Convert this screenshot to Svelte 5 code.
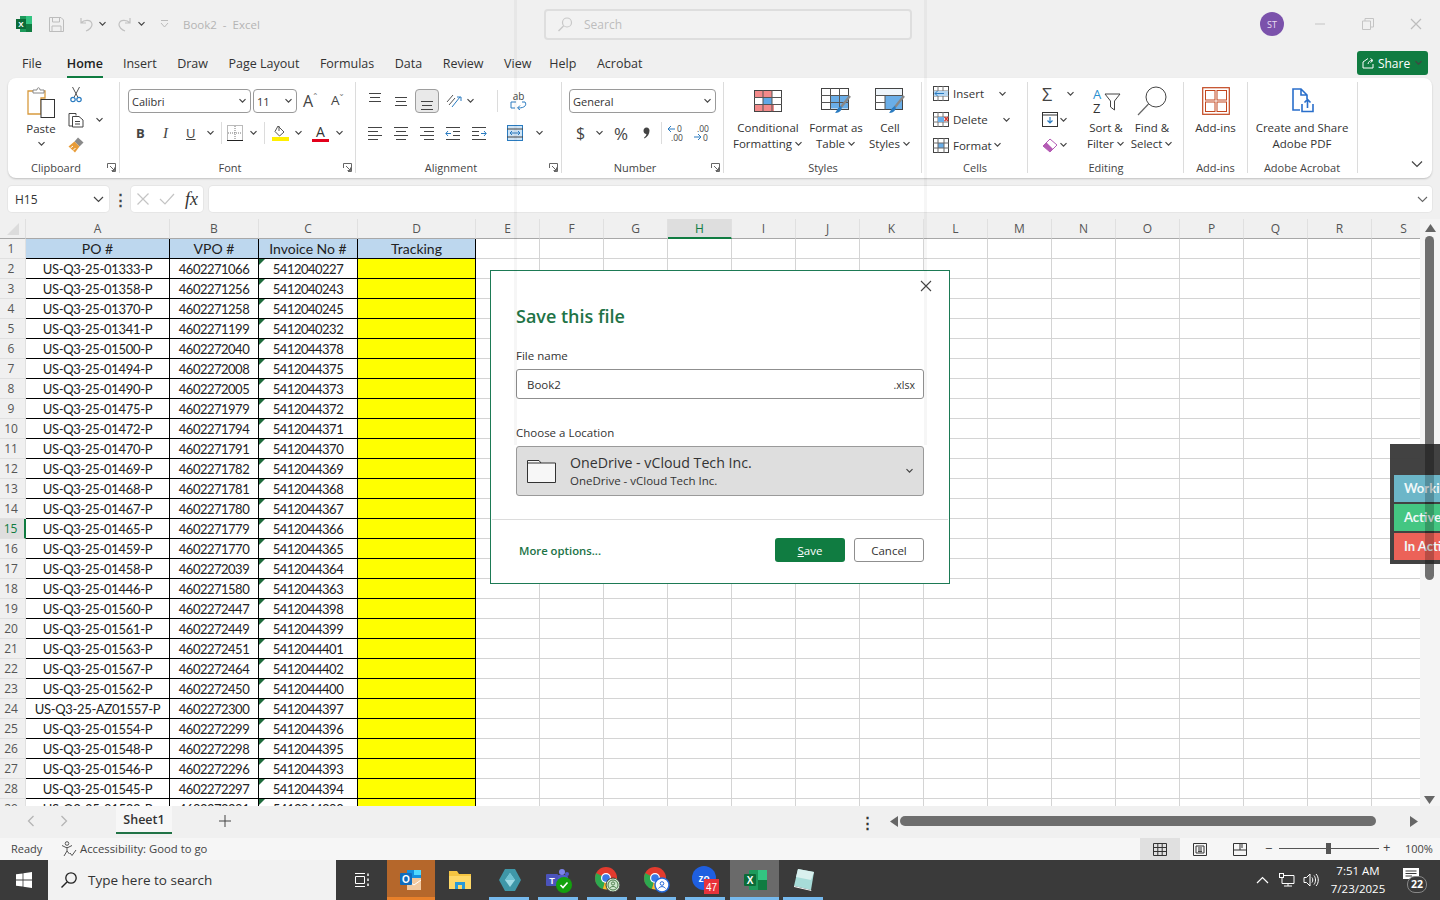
<script>
  const cols = ['E','F','G','H','I','J','K','L','M','N','O','P','Q','R','S'];
  const d = [
    ['US-Q3-25-01333-P','4602271066','5412040227'],['US-Q3-25-01358-P','4602271256','5412040243'],
    ['US-Q3-25-01370-P','4602271258','5412040245'],['US-Q3-25-01341-P','4602271199','5412040232'],
    ['US-Q3-25-01500-P','4602272040','5412044378'],['US-Q3-25-01494-P','4602272008','5412044375'],
    ['US-Q3-25-01490-P','4602272005','5412044373'],['US-Q3-25-01475-P','4602271979','5412044372'],
    ['US-Q3-25-01472-P','4602271794','5412044371'],['US-Q3-25-01470-P','4602271791','5412044370'],
    ['US-Q3-25-01469-P','4602271782','5412044369'],['US-Q3-25-01468-P','4602271781','5412044368'],
    ['US-Q3-25-01467-P','4602271780','5412044367'],['US-Q3-25-01465-P','4602271779','5412044366'],
    ['US-Q3-25-01459-P','4602271770','5412044365'],['US-Q3-25-01458-P','4602272039','5412044364'],
    ['US-Q3-25-01446-P','4602271580','5412044363'],['US-Q3-25-01560-P','4602272447','5412044398'],
    ['US-Q3-25-01561-P','4602272449','5412044399'],['US-Q3-25-01563-P','4602272451','5412044401'],
    ['US-Q3-25-01567-P','4602272464','5412044402'],['US-Q3-25-01562-P','4602272450','5412044400'],
    ['US-Q3-25-AZ01557-P','4602272300','5412044397'],['US-Q3-25-01554-P','4602272299','5412044396'],
    ['US-Q3-25-01548-P','4602272298','5412044395'],['US-Q3-25-01546-P','4602272296','5412044393'],
    ['US-Q3-25-01545-P','4602272297','5412044394'],['US-Q3-25-01533-P','4602272291','5412044390']
  ];
  const tabs = ['File','Home','Insert','Draw','Page Layout','Formulas','Data','Review','View','Help','Acrobat'];
</script>

{#snippet chev(cls = '')}
  <svg class="chev {cls}" width="9" height="6" viewBox="0 0 9 6"><path d="M1.5 1.2 4.5 4.2 7.5 1.2" fill="none" stroke="currentColor" stroke-width="1.2"/></svg>
{/snippet}
{#snippet launcher()}
  <svg class="launcher" width="9" height="9" viewBox="0 0 9 9"><path d="M.5 5V.5H8.5V8.5H5M3 3 7.5 7.5M7.5 4.5V7.5H4.5" fill="none" stroke="#666" stroke-width="1"/></svg>
{/snippet}

<div class="app">
  <header class="title">
    <svg class="logo" width="18" height="18" viewBox="0 0 18 18"><rect x="5" y="1" width="12" height="16" fill="#1d9a5b"/><rect x="11" y="1" width="6" height="8" fill="#33c481"/><rect x="11" y="9" width="6" height="8" fill="#107c41"/><rect x="1" y="4" width="10" height="10" fill="#0c6b38"/><text x="6" y="12" fill="#fff" font-size="8" font-weight="700" text-anchor="middle" font-family="Liberation Sans">X</text></svg>
    <svg class="qa qsave" width="17" height="17" viewBox="0 0 17 17"><path d="M1.5 1.5H13L15.5 4V15.5H1.5ZM4.5 1.5V6H11.5V1.5M4 15.5V10H13V15.5" fill="none" stroke="#bcbcbc"/></svg>
    <svg class="qa undo" width="16" height="15" viewBox="0 0 16 15"><path d="M3 1V6H8M3 6C6 2.5 13 2 14 7 14.5 10 11 13 8 14" fill="none" stroke="#c0c0c0" stroke-width="1.2"/></svg>
    <span class="qc qc1">{@render chev()}</span>
    <svg class="qa redo" width="16" height="15" viewBox="0 0 16 15"><path d="M13 1V6H8M13 6C10 2.5 3 2 2 7 1.5 10 5 13 8 14" fill="none" stroke="#c0c0c0" stroke-width="1.2"/></svg>
    <span class="qc qc2">{@render chev()}</span>
    <svg class="qa cust" width="9" height="10" viewBox="0 0 9 10"><path d="M1 1.5H8M1 4 4.5 8 8 4" fill="none" stroke="#bbb"/></svg>
    <span class="doc">Book2&nbsp; - &nbsp;Excel</span>
    <div class="search">
      <svg width="17" height="17" viewBox="0 0 17 17"><circle cx="10" cy="6.5" r="4.5" fill="none" stroke="#c8c8c8" stroke-width="1.2"/><path d="M6.5 10 1.5 15" stroke="#c8c8c8" stroke-width="1.4"/></svg>
      <span>Search</span>
    </div>
    <div class="avatar">ST</div>
    <svg class="win first" width="12" height="12" viewBox="0 0 12 12"><path d="M1 6H11" stroke="#c4c4c4"/></svg>
    <svg class="win" width="12" height="12" viewBox="0 0 12 12"><path d="M.5 3H8.5V11.5H.5ZM3 3V.5H11.5V9H8.5" fill="none" stroke="#c4c4c4"/></svg>
    <svg class="win" width="12" height="12" viewBox="0 0 12 12"><path d="M1 1 11 11M11 1 1 11" stroke="#bdbdbd" stroke-width="1.2"/></svg>
  </header>

  <nav class="tabs">
    {#each tabs as t}<span class="tab tab-{t.split(' ')[0]}" class:on={t === 'Home'}>{t}</span>{/each}
    <button class="share">
      <svg width="12" height="12" viewBox="0 0 12 12"><path d="M6 1.5 1 5V11H11V7M6 7C6.5 4.5 8 3.5 10 3.5M8.5 1.5 11 3.5 8.5 5.5" fill="none" stroke="#fff"/></svg>
      Share {@render chev()}
    </button>
  </nav>

  <section class="ribbon">
    <div class="g clip">
      <div class="gb">
        <div class="paste">
          <svg width="28" height="31" viewBox="0 0 28 31"><path d="M6 4H18V11H14V27H1V4Z" fill="#fff" stroke="#d89a3e" stroke-width="1.3"/><path d="M6 6V3H10C10 0 13 0 13 3H17V6Z" fill="#fff" stroke="#888"/><rect x="14" y="12.5" width="13.5" height="18" fill="#fff" stroke="#333"/></svg>
          <span>Paste</span>
          {@render chev()}
        </div>
        <div class="clipcol">
          <svg width="12" height="17" viewBox="0 0 12 17"><path d="M2.5 1 8 11.5M9.5 1 4 11.5" stroke="#555" fill="none"/><circle cx="3" cy="13.5" r="2.2" fill="none" stroke="#2a7bc0" stroke-width="1.2"/><circle cx="9" cy="13.5" r="2.2" fill="none" stroke="#2a7bc0" stroke-width="1.2"/></svg>
          <div class="r"><svg width="16" height="16" viewBox="0 0 16 16"><path d="M1 1.5H8V3.5M4 14H1V1.5M4.5 4.5H11L15 8V15H4.5ZM7 9.5H12M7 12H12" fill="#fff" stroke="#444"/></svg>{@render chev()}</div>
          <svg width="16" height="16" viewBox="0 0 16 16"><path d="M10 .5 15.5 5.5 11.5 9.5 6.5 4.5Z" fill="#8a8a8a"/><path d="M6.5 4.5 11.5 9.5 7 15.5 .5 9.5Z" fill="#e89c38"/><path d="M2.5 11 5 9M5 13.5 7.5 11" stroke="#fff"/></svg>
        </div>
      </div>
      <div class="gl lg"><span>Clipboard</span>{@render launcher()}</div>
    </div>

    <div class="g font">
      <div class="gb col">
        <div class="r rt">
          <div class="sel fname"><span>Calibri</span>{@render chev()}</div>
          <div class="sel fsize"><span>11</span>{@render chev()}</div>
          <span class="grow g1">A<sup>ˆ</sup></span>
          <span class="shrink">A<sup>ˇ</sup></span>
        </div>
        <div class="r rb">
          <span class="fb">B</span><span class="fi">I</span><span class="fu">U</span>{@render chev('c1')}
          <i class="sep s1"></i>
          <svg class="bd" width="16" height="16" viewBox="0 0 16 16"><rect x=".5" y=".5" width="15" height="15" fill="none" stroke="#777" stroke-dasharray="1 1"/><path d="M8 1V15M1 8H15" stroke="#777" stroke-dasharray="1 1"/><path d="M0 15.5H16" stroke="#222"/></svg>
          {@render chev('c2')}
          <i class="sep s2"></i>
          <svg class="fill" width="17" height="16" viewBox="0 0 17 16"><path d="M6 1 12 7 7.5 11 3 6.5Z" fill="#fff" stroke="#555"/><path d="M7 1 7 6" stroke="#555"/><rect y="12" width="17" height="4" fill="#ffef00"/></svg>
          {@render chev('c3')}
          <span class="fc">A</span>
          {@render chev('c4')}
        </div>
      </div>
      <div class="gl lg"><span>Font</span>{@render launcher()}</div>
    </div>

    <div class="g align">
      <div class="gb col">
        <div class="r rt">
          <span class="a"><svg width="16" height="24" viewBox="0 0 16 24"><path d="M2 4.5H14M3 8.5H13M2 12.5H14" stroke="#444" fill="none"/></svg></span>
          <span class="a"><svg width="16" height="24" viewBox="0 0 16 24"><path d="M2 8.5H14M3 12.5H13M2 16.5H14" stroke="#444" fill="none"/></svg></span>
          <span class="a actv"><svg width="16" height="22" viewBox="0 0 16 22"><path d="M2 11.5H14M3 15.5H13M2 19.5H14" stroke="#444" fill="none"/></svg></span>
          <svg class="ori" width="16" height="14" viewBox="0 0 16 14"><path d="M1 8 7 1M3 11 9 4" stroke="#555" fill="none"/><path d="M6 13 14 3M11 3H15V7" stroke="#2a7bc0" fill="none"/></svg>
          {@render chev('c5')}
          <i class="sep s3"></i>
          <span class="wrap"><b>ab</b><svg width="17" height="9" viewBox="0 0 17 9"><path d="M6 1H1V7H5M12 1H15C17 4 15 7 8 7M10 4.5 7.5 7 10 9" stroke="#2a7bc0" fill="none"/></svg></span>
        </div>
        <div class="r rb">
          <span class="a"><svg width="16" height="14" viewBox="0 0 16 14"><path d="M1 1.5H15M1 5.5H11M1 9.5H15M1 13.5H11" stroke="#444" fill="none"/></svg></span>
          <span class="a"><svg width="16" height="14" viewBox="0 0 16 14"><path d="M1 1.5H15M3 5.5H13M1 9.5H15M3 13.5H13" stroke="#444" fill="none"/></svg></span>
          <span class="a"><svg width="16" height="14" viewBox="0 0 16 14"><path d="M1 1.5H15M5 5.5H15M1 9.5H15M5 13.5H15" stroke="#444" fill="none"/></svg></span>
          <span class="a"><svg width="16" height="14" viewBox="0 0 16 14"><path d="M1 1.5H15M8 5.5H15M8 9.5H15M1 13.5H15" stroke="#444" fill="none"/><path d="M6 7.5H1M3 5 .8 7.5 3 10" stroke="#2a7bc0" fill="none"/></svg></span>
          <span class="a"><svg width="16" height="14" viewBox="0 0 16 14"><path d="M1 1.5H15M1 5.5H8M1 9.5H8M1 13.5H15" stroke="#444" fill="none"/><path d="M10 7.5H15M13 5 15.2 7.5 13 10" stroke="#2a7bc0" fill="none"/></svg></span>
          <svg class="merge" width="16" height="16" viewBox="0 0 16 16"><rect x=".5" y=".5" width="15" height="15" fill="#cfe4f5" stroke="#2a7bc0"/><path d="M0 4H16M0 12H16" stroke="#444"/><path d="M3 8H13M5 6 3 8 5 10M11 6 13 8 11 10" fill="none" stroke="#2a7bc0"/></svg>
          {@render chev('c6')}
        </div>
      </div>
      <div class="gl lg"><span>Alignment</span>{@render launcher()}</div>
    </div>

    <div class="g num">
      <div class="gb col">
        <div class="r rt"><div class="sel nf"><span>General</span>{@render chev()}</div></div>
        <div class="r rb">
          <span class="dollar">$</span>{@render chev('c7')}
          <span class="pct">%</span>
          <svg class="comma" width="7" height="12" viewBox="0 0 7 12"><path d="M3.5.5C5.5.5 6.5 2 6.5 3.8 6.5 7 4.5 10 1.5 11.5L1 10.7C2.5 9.5 3.3 8.3 3.4 7 1.5 7 .5 5.5.5 3.8.5 2 1.7.5 3.5.5Z" fill="#444"/></svg>
          <i class="sep s5"></i>
          <svg class="dec" width="18" height="18" viewBox="0 0 18 18"><path d="M8 5H1M4 2 1 5 4 8" stroke="#2a7bc0" fill="none"/><text x="10" y="8" font-size="8.5" fill="#444">0</text><text x="4" y="17" font-size="8.5" fill="#444">.00</text></svg>
          <svg class="dec d2" width="18" height="18" viewBox="0 0 18 18"><text x="4" y="8" font-size="8.5" fill="#444">.00</text><path d="M8 13H1M5 10 8 13 5 16" stroke="#2a7bc0" fill="none"/><text x="10" y="17" font-size="8.5" fill="#444">0</text></svg>
        </div>
      </div>
      <div class="gl lg"><span>Number</span>{@render launcher()}</div>
    </div>

    <div class="g sty">
      <div class="gb bigs">
        <div class="big b1">
          <svg width="28" height="22" viewBox="0 0 28 22"><rect x=".5" y=".5" width="27" height="21" fill="#fff" stroke="#444"/><rect x="1" y="1" width="17" height="6.5" fill="#f28a8a"/><rect x="1" y="14" width="19" height="7" fill="#f28a8a"/><rect x="9" y="7.5" width="9" height="7" fill="#5fa8e6"/><path d="M9 0V22M18 0V22M0 7.5H28M0 14.5H28" stroke="#555"/></svg>
          <span>Conditional<br>Formatting{@render chev()}</span>
        </div>
        <div class="big b2">
          <svg width="30" height="26" viewBox="0 0 30 26"><rect x=".5" y=".5" width="27" height="21" fill="#fff" stroke="#444"/><rect x="10" y="7.5" width="17" height="13" fill="#6aaee8"/><path d="M9.5 0V22M18.5 0V22M0 7.5H28M0 14.5H28" stroke="#555"/><path d="M29 8 20 19" stroke="#888" stroke-width="2.4"/><path d="M20 18C22 20 20 25 14 25 16 23 16 20 20 18Z" fill="#2a7bc0"/></svg>
          <span>Format as<br>Table{@render chev()}</span>
        </div>
        <div class="big b3">
          <svg width="30" height="26" viewBox="0 0 30 26"><rect x=".5" y=".5" width="27" height="21" fill="#fff" stroke="#444"/><rect x="10" y="7" width="17" height="14" fill="#6aaee8"/><rect x="1" y="1" width="26" height="6" fill="#eef5fb"/><path d="M0 7.5H28M10 7V22M0 14.5H10" stroke="#555"/><path d="M29 8 20 19" stroke="#888" stroke-width="2.4"/><path d="M20 18C22 20 20 25 14 25 16 23 16 20 20 18Z" fill="#2a7bc0"/></svg>
          <span>Cell<br>Styles{@render chev()}</span>
        </div>
      </div>
      <div class="gl center"><span>Styles</span></div>
    </div>

    <div class="g cells">
      <div class="gb col three">
        <div class="r cr">
          <svg width="16" height="15" viewBox="0 0 16 15"><rect x=".5" y=".5" width="15" height="14" fill="#fff" stroke="#444"/><path d="M5 0V15M10 0V15M0 5H16M0 10H16" stroke="#777"/><rect x="1" y="5" width="14" height="5" fill="#b6d7f2"/><path d="M11 7.5H2M4.5 5 2 7.5 4.5 10" stroke="#2a7bc0" fill="none"/></svg>
          <span>Insert</span>{@render chev('ci')}
        </div>
        <div class="r cr">
          <svg width="16" height="15" viewBox="0 0 16 15"><rect x=".5" y=".5" width="15" height="14" fill="#fff" stroke="#444"/><path d="M5 0V15M10 0V15M0 5H16M0 10H16" stroke="#777"/><rect x="5" y="5" width="6" height="5" fill="#6aaee8"/><path d="M11.5 5 15 9M15 5 11.5 9" stroke="#d9362b" stroke-width="1.3"/></svg>
          <span>Delete</span>{@render chev('cd')}
        </div>
        <div class="r cr">
          <svg width="16" height="16" viewBox="0 0 16 16"><rect x=".5" y="1.5" width="15" height="14" fill="#fff" stroke="#444"/><rect x="5" y="6" width="6" height="5" fill="#6aaee8"/><path d="M5 1V16M11 1V16M0 6H16M0 11H16" stroke="#666"/></svg>
          <span>Format</span>{@render chev('cf')}
        </div>
      </div>
      <div class="gl center"><span>Cells</span></div>
    </div>

    <div class="g edit">
      <div class="gb eb">
        <div class="col ec">
          <div class="r"><span class="sigma">Σ</span>{@render chev('e1')}</div>
          <div class="r"><svg width="16" height="15" viewBox="0 0 16 15"><rect x=".5" y=".5" width="15" height="14" fill="#fff" stroke="#333"/><path d="M0 3H16" stroke="#333"/><path d="M8 5V11M5.5 8.5 8 11 10.5 8.5" stroke="#2a7bc0" fill="none" stroke-width="1.2"/></svg>{@render chev('e2')}</div>
          <div class="r"><svg width="16" height="15" viewBox="0 0 16 15"><path d="M8 1 15 7 8 14 1 8Z" fill="#fff" stroke="#b45bb4"/><path d="M4.5 4.5 11 11 8 14 1 8Z" fill="#b45bb4"/></svg>{@render chev('e2')}</div>
        </div>
        <div class="big sort">
          <svg width="30" height="30" viewBox="0 0 30 30"><text x="2" y="13" font-size="13" fill="#2a8fd0" font-family="Open Sans">A</text><text x="2" y="27" font-size="13" fill="#333" font-family="Open Sans">Z</text><path d="M14 8H29L23.5 15V24L19.5 21V15Z" fill="#fff" stroke="#444"/></svg>
          <span>Sort &amp;<br>Filter{@render chev()}</span>
        </div>
        <div class="big find">
          <svg width="30" height="30" viewBox="0 0 30 30"><circle cx="19" cy="11" r="10" fill="#fff" stroke="#444"/><path d="M11.5 18 1 29" stroke="#666" stroke-width="1.2"/></svg>
          <span>Find &amp;<br>Select{@render chev()}</span>
        </div>
      </div>
      <div class="gl center"><span>Editing</span></div>
    </div>

    <div class="g addins">
      <div class="gb bigs">
        <div class="big solo">
          <svg width="28" height="28" viewBox="0 0 28 28"><rect x=".7" y=".7" width="26.6" height="26.6" fill="#fff" stroke="#c2471f" stroke-width="1.2"/><rect x="3.5" y="3.5" width="9.5" height="9.5" fill="none" stroke="#c2471f"/><rect x="15" y="3.5" width="9.5" height="9.5" fill="none" stroke="#c2471f"/><rect x="3.5" y="15" width="9.5" height="9.5" fill="none" stroke="#c2471f"/><rect x="15" y="15" width="9.5" height="9.5" fill="none" stroke="#c2471f"/></svg>
          <span>Add-ins</span>
        </div>
      </div>
      <div class="gl center"><span>Add-ins</span></div>
    </div>

    <div class="g adobe">
      <div class="gb bigs">
        <div class="big solo">
          <svg width="28" height="28" viewBox="0 0 28 28"><path d="M12 23H5V2H13L19 8V12M13 2V8H19" fill="none" stroke="#2a6fcb" stroke-width="1.6"/><path d="M14 17V24.5H25V17M19.5 21V13M16.5 15.5 19.5 12.5 22.5 15.5" fill="none" stroke="#2a6fcb" stroke-width="1.6"/></svg>
          <span>Create and Share<br>Adobe PDF</span>
        </div>
      </div>
      <div class="gl center"><span>Adobe Acrobat</span></div>
    </div>

    <svg class="collapse" width="12" height="8" viewBox="0 0 12 8"><path d="M1 1.5 6 6.5 11 1.5" fill="none" stroke="#444" stroke-width="1.2"/></svg>
  </section>

  <section class="fbar">
    <div class="namebox"><span>H15</span><svg width="11" height="7" viewBox="0 0 11 7"><path d="M1 1 5.5 5.5 10 1" fill="none" stroke="#444" stroke-width="1.2"/></svg></div>
    <span class="vdots">⋮</span>
    <div class="fxbox">
      <svg width="14" height="14" viewBox="0 0 14 14"><path d="M1.5 1.5 12.5 12.5M12.5 1.5 1.5 12.5" stroke="#c4c4c4" stroke-width="1.2"/></svg>
      <svg width="16" height="14" viewBox="0 0 16 14"><path d="M1 7 6 12 15 2" stroke="#c4c4c4" stroke-width="1.2" fill="none"/></svg>
      <em>fx</em>
    </div>
    <div class="finput"><svg width="11" height="7" viewBox="0 0 11 7"><path d="M1 1 5.5 5.5 10 1" fill="none" stroke="#666" stroke-width="1.1"/></svg></div>
  </section>

  <section class="sheet">
    <div class="grid">
      <div class="ch corner"><svg width="12" height="12" viewBox="0 0 12 12"><path d="M12 0V12H0Z" fill="#dcdcdc"/></svg></div>
      {#each ['A','B','C','D'] as c}<div class="ch">{c}</div>{/each}
      {#each cols as c}<div class="ch" class:chon={c === 'H'}>{c}</div>{/each}

      <div class="rh">1</div>
      <div class="c hd">PO #</div><div class="c hd">VPO #</div><div class="c hd">Invoice No #</div><div class="c hd">Tracking</div>
      {#each cols as c}<div class="e"></div>{/each}

      {#each d as row, i}
        <div class="rh" class:rhon={i + 2 === 15}>{i + 2}</div>
        <div class="c po">{row[0]}</div><div class="c n">{row[1]}</div><div class="c n tri">{row[2]}</div><div class="c y"></div>
        {#each cols as c}<div class="e"></div>{/each}
      {/each}
    </div>
    <div class="vsb">
      <svg width="11" height="8" viewBox="0 0 11 8"><path d="M5.5 0 11 8H0Z" fill="#666"/></svg>
      <div class="vthumb"></div>
      <svg class="vdown" width="11" height="8" viewBox="0 0 11 8"><path d="M5.5 8 11 0H0Z" fill="#666"/></svg>
    </div>
  </section>

  <section class="tabbar">
    <svg class="nav" width="8" height="12" viewBox="0 0 8 12"><path d="M6.5 1 1.5 6 6.5 11" fill="none" stroke="#b5b5b5" stroke-width="1.3"/></svg>
    <svg class="nav nx" width="8" height="12" viewBox="0 0 8 12"><path d="M1.5 1 6.5 6 1.5 11" fill="none" stroke="#b5b5b5" stroke-width="1.3"/></svg>
    <div class="stab">Sheet1</div>
    <svg class="plus" width="12" height="12" viewBox="0 0 12 12"><path d="M6 0V12M0 6H12" stroke="#444"/></svg>
    <span class="hdots">⋮</span>
    <svg class="harr" width="8" height="11" viewBox="0 0 8 11"><path d="M0 5.5 8 0V11Z" fill="#666"/></svg>
    <div class="hthumb"></div>
    <svg class="harr r2" width="8" height="11" viewBox="0 0 8 11"><path d="M8 5.5 0 0V11Z" fill="#666"/></svg>
  </section>

  <footer class="status">
    <span class="ready">Ready</span>
    <svg class="acc" width="16" height="16" viewBox="0 0 16 16"><circle cx="6" cy="2.5" r="1.8" fill="none" stroke="#555"/><path d="M1 4.5 5 6.5H7L11 4.5M6 7V10L3 15M6 10 8.5 13" fill="none" stroke="#555"/><path d="M9 12 11 14.5 15 9" fill="none" stroke="#555"/></svg>
    <span class="acct">Accessibility: Good to go</span>
    <div class="views">
      <span class="vw on"><svg width="14" height="13" viewBox="0 0 14 13"><path d="M.5.5H13.5V12.5H.5ZM.5 4.5H13.5M.5 8.5H13.5M4.8.5V12.5M9.2.5V12.5" fill="none" stroke="#333"/></svg></span>
      <span class="vw"><svg width="14" height="13" viewBox="0 0 14 13"><path d="M.5.5H13.5V12.5H.5ZM3 3H11V10H3ZM5 5H9M5 7H9M5 8.6H9" fill="none" stroke="#333"/></svg></span>
      <span class="vw"><svg width="14" height="13" viewBox="0 0 14 13"><path d="M.5.5H13.5V12.5H.5ZM7 .5V7H.5M7 7H13.5" fill="none" stroke="#333"/><path d="M9 .5V5" stroke="#333"/></svg></span>
    </div>
    <span class="zm">−</span>
    <div class="slider"><i></i></div>
    <span class="zp">+</span>
    <span class="zv">100%</span>
  </footer>

  <footer class="taskbar">
    <div class="start"><svg width="16" height="16" viewBox="0 0 16 16" fill="#fff"><path d="M0 2.3 6.6 1.4V7.6H0ZM7.4 1.3 16 0V7.6H7.4ZM0 8.4H6.6V14.6L0 13.7ZM7.4 8.4H16V16L7.4 14.7Z"/></svg></div>
    <div class="tsearch">
      <svg width="18" height="18" viewBox="0 0 18 18"><circle cx="11" cy="7" r="5.2" fill="none" stroke="#222" stroke-width="1.3"/><path d="M7 11 1.5 16.5" stroke="#222" stroke-width="1.5"/></svg>
      <span>Type here to search</span>
    </div>
    <div class="ti tv"><svg width="16" height="14" viewBox="0 0 16 14"><path d="M1 .5H11M1 13.5H11M1.5 3.5H10.5V10.5H1.5Z" fill="none" stroke="#fff"/><path d="M14 .5V3M14 5.5V8M14 10.5V13" stroke="#fff" stroke-width="1.4"/></svg></div>
    <div class="ti out">
      <svg width="24" height="22" viewBox="0 0 24 22"><rect x="8" y="1" width="14" height="10" fill="#1490df"/><rect x="15" y="1" width="7" height="5" fill="#50d9ff"/><rect x="8" y="9" width="14" height="12" fill="#f1c9a0"/><path d="M8 11 15 16 22 11" stroke="#fff" fill="none"/><rect x="1" y="4" width="12" height="12" rx="1" fill="#0f6cbd"/><text x="7" y="14" fill="#fff" font-size="10" font-weight="700" text-anchor="middle" font-family="Liberation Sans">O</text></svg>
    </div>
    <div class="ti ex"><svg width="22" height="20" viewBox="0 0 22 20"><path d="M0 1H8L10 4H22V19H0Z" fill="#f5c542"/><rect y="6" width="22" height="13" fill="#ffd968"/><rect x="6" y="12" width="10" height="7" fill="#2a9ad8"/><rect x="9" y="15" width="4" height="4" fill="#ffd968"/></svg></div>
    <div class="ti run"><svg width="22" height="24" viewBox="0 0 22 24"><path d="M6 1H16L22 12 16 23H6L0 12Z" fill="#3f97a8"/><path d="M11 5 16 12 11 19 6 12Z" fill="#9fdbe6"/><path d="M11 5 16 12H6Z" fill="#6fc2d2"/></svg></div>
    <div class="ti run"><svg width="28" height="26" viewBox="0 0 28 26"><circle cx="17" cy="5" r="3" fill="#7b83eb"/><circle cx="22" cy="7" r="2" fill="#5059c9"/><rect x="11" y="8" width="12" height="9" rx="3" fill="#5059c9"/><rect x="1" y="7" width="12" height="12" rx="1" fill="#4b53bc"/><text x="7" y="16.5" fill="#fff" font-size="9" font-weight="700" text-anchor="middle" font-family="Liberation Sans">T</text><circle cx="19" cy="18" r="8" fill="#13a10e"/><path d="M15.5 18 18 20.5 22.5 15.5" stroke="#fff" stroke-width="1.6" fill="none"/></svg></div>
    <div class="ti run">
      <svg width="28" height="28" viewBox="0 0 28 28"><circle cx="12" cy="12" r="11" fill="#e33b2e"/><path d="M12 12 2 7 1 12A11 11 0 0 0 9 23Z" fill="#2da94f"/><path d="M12 12H23A11 11 0 0 1 9 23Z" fill="#fbc02d"/><circle cx="12" cy="12" r="5" fill="#fff"/><circle cx="12" cy="12" r="3.8" fill="#3b78e7"/><circle cx="19" cy="19" r="7" fill="#cfe8cf" stroke="#3a3a3a"/><circle cx="19" cy="19" r="5" fill="none" stroke="#4c7c4c"/><circle cx="19" cy="17.5" r="1.6" fill="none" stroke="#4c7c4c"/><path d="M16 22C17 20 21 20 22 22" stroke="#4c7c4c" fill="none"/></svg>
    </div>
    <div class="ti run">
      <svg width="28" height="28" viewBox="0 0 28 28"><circle cx="12" cy="12" r="11" fill="#e33b2e"/><path d="M12 12 2 7 1 12A11 11 0 0 0 9 23Z" fill="#2da94f"/><path d="M12 12H23A11 11 0 0 1 9 23Z" fill="#fbc02d"/><circle cx="12" cy="12" r="5" fill="#fff"/><circle cx="12" cy="12" r="3.8" fill="#3b78e7"/><circle cx="19" cy="19" r="7" fill="#fff" stroke="#2468d8" stroke-width="1.5"/><circle cx="19" cy="17.5" r="1.8" fill="none" stroke="#2468d8"/><path d="M15.5 22.5C17 20 21 20 22.5 22.5" stroke="#2468d8" fill="none"/></svg>
    </div>
    <div class="ti run zoho">
      <svg width="28" height="28" viewBox="0 0 28 28"><circle cx="12" cy="12" r="12" fill="#1f5fe0"/><text x="12" y="15.5" fill="#fff" font-size="10" font-weight="700" text-anchor="middle" font-family="Liberation Sans">zo</text><rect x="12" y="13" width="15" height="15" fill="#e8323a"/><text x="19.5" y="25" fill="#fff" font-size="10" text-anchor="middle" font-family="Liberation Sans">47</text></svg>
    </div>
    <div class="ti run act">
      <svg width="24" height="22" viewBox="0 0 24 22"><rect x="6" y="1" width="18" height="20" rx="1" fill="#1d9a5b"/><rect x="15" y="1" width="9" height="10" fill="#33c481"/><rect x="15" y="11" width="9" height="10" fill="#107c41"/><rect x="1" y="5" width="12" height="12" rx="1" fill="#0c6b38"/><text x="7" y="14.5" fill="#fff" font-size="10" font-weight="700" text-anchor="middle" font-family="Liberation Sans">X</text></svg>
    </div>
    <div class="ti run last"><svg width="24" height="24" viewBox="0 0 24 24"><path d="M6 1 22 4 19 22 2 18Z" fill="#a7dcd8"/><path d="M6 1 22 4 19 12 4 9Z" fill="#d9f0ee"/><path d="M2 18 19 22 19.5 23 2 19Z" fill="#fff"/></svg></div>

    <div class="tray">
      <svg width="13" height="8" viewBox="0 0 13 8"><path d="M1 7 6.5 1.5 12 7" fill="none" stroke="#fff" stroke-width="1.2"/></svg>
      <svg class="tnet" width="16" height="14" viewBox="0 0 16 14"><path d="M3 2.5H15V10.5H3ZM9 10.5V13M5 13H13" fill="none" stroke="#fff"/><rect x=".5" y=".5" width="4" height="4" fill="#3a3a3a" stroke="#fff"/></svg>
      <svg class="tvol" width="17" height="14" viewBox="0 0 17 14"><path d="M1 4.5H3.5L7 1V13L3.5 9.5H1ZM9 4.5C10 6 10 8 9 9.5M11 2.5C13 5 13 9 11 11.5M13 1C16 4 16 10 13 13" fill="none" stroke="#fff"/></svg>
      <div class="clock"><span>7:51 AM</span><span>7/23/2025</span></div>
      <div class="notif">
        <svg width="16" height="14" viewBox="0 0 16 14"><path d="M0 0H16V11H0Z" fill="#fff"/><path d="M2.5 3H13.5M2.5 5.5H13.5M2.5 8H9" stroke="#3a3a3a"/></svg>
        <b>22</b>
      </div>
    </div>
  </footer>

  <!-- save dialog -->
  <div class="dialog">
    <svg class="dclose" width="12" height="12" viewBox="0 0 12 12"><path d="M1 1 11 11M11 1 1 11" stroke="#444" stroke-width="1.1"/></svg>
    <h1>Save this file</h1>
    <label for="fn">File name</label>
    <div class="in" id="fn"><span>Book2</span><small>.xlsx</small></div>
    <label for="loc" class="l2">Choose a Location</label>
    <div class="loc" id="loc">
      <svg width="29" height="23" viewBox="0 0 29 23"><path d="M.5 22.5V.5H12L14 3H28.5V22.5Z" fill="#f7f7f7" stroke="#333"/><path d="M.5 3H14" stroke="#333"/></svg>
      <div class="lt"><strong>OneDrive - vCloud Tech Inc.</strong><span>OneDrive - vCloud Tech Inc.</span></div>
      {@render chev()}
    </div>
    <hr />
    <div class="dfoot">
      <span class="more">More options...</span>
      <button class="save"><u>S</u>ave</button>
      <button class="cancel">Cancel</button>
    </div>
  </div>

  <div class="widget">
    <div class="wb wa">Working</div>
    <div class="wb wg">Active</div>
    <div class="wb wr">In Active</div>
  </div>

  <i class="ghost gl1"></i>
  <i class="ghost gl2"></i>
</div>

<style>
  :global(body) { margin: 0; background: #f0f0f0; }
  .app {
    position: relative; width: 1440px; height: 900px; overflow: hidden;
    display: flex; flex-direction: column; background: #f0f0f0;
    font-family: "Open Sans", "Noto Sans", sans-serif; font-size: 12px; color: #333;
  }
  svg { display: block; flex: none; }
  i { font-style: normal; }
  .r { display: flex; align-items: center; }
  .col { display: flex; flex-direction: column; }

  /* title */
  .title { height: 48px; flex: none; display: flex; align-items: center; padding-left: 15px; box-sizing: border-box; }
  .qsave { margin-left: 15px; }
  .qa.undo { margin-left: 13px; }
  .qc { color: #c0c0c0; }
  .qc1 { margin-left: 4px; }
  .qa.redo { margin-left: 10px; }
  .qc2 { margin-left: 4px; }
  .qa.cust { margin-left: 14px; }
  .doc { margin-left: 14px; width: 80px; font-size: 11.5px; color: #b4b4b4; white-space: nowrap; }
  .search { margin-left: 281px; width: 368px; height: 31px; box-sizing: border-box; border: 2px solid #dedede; border-radius: 4px; background: #f2f2f2; display: flex; align-items: center; padding-left: 11px; gap: 10px; color: #bdbdbd; font-size: 12px; }
  .avatar { margin-left: 348px; width: 24px; height: 24px; border-radius: 50%; background: #7b52ab; color: #e8dff2; font-size: 9px; display: flex; align-items: center; justify-content: center; }
  .win { margin-left: 36px; }
  .win.first { margin-left: 30px; }

  /* tabs */
  .tabs { height: 30px; flex: none; display: flex; align-items: center; padding-left: 22px; position: relative; font-size: 12.5px; color: #333; }
  .tab { position: relative; white-space: nowrap; margin-right: 20.5px; padding-top: 1px; }
  .tab.on { font-weight: 600; color: #222; margin-right: 20px; }
  .tab.on::after { content: ''; position: absolute; left: 0; right: 0; bottom: -6px; height: 2px; background: #107c41; }
  .tab-File { margin-right: 25px; }
  .tab-View { margin-right: 18px; }
  .share { position: absolute; left: 1357px; top: 3px; width: 71px; height: 24px; border: 0; border-radius: 3px; background: #107c41; color: #fff; font: 12px "Open Sans", sans-serif; display: flex; align-items: center; justify-content: center; gap: 4px; padding: 0; }

  /* ribbon */
  .ribbon { height: 100px; flex: none; margin: 0 8px; background: #fff; border-radius: 8px; box-shadow: 0 1px 2px rgba(0,0,0,.2); display: flex; position: relative; box-sizing: border-box; }
  .g { display: flex; flex-direction: column; box-sizing: border-box; position: relative; flex: none; }
  .g::after { content: ''; position: absolute; right: 0; top: 4px; bottom: 5px; width: 1px; background: #dcdcdc; }
  .gb { flex: 1; min-height: 0; }
  .gl { height: 20px; box-sizing: border-box; padding-bottom: 2px; flex: none; display: flex; align-items: center; font-size: 11px; color: #444; position: relative; justify-content: center; }
  .gl.lg { padding-right: 16px; }
  .launcher { position: absolute; right: 4px; top: 5px; }
  .clip { width: 112px; }
  .font { width: 236px; }
  .align { width: 206px; }
  .num { width: 162px; }
  .sty { width: 198px; }
  .cells { width: 106px; }
  .edit { width: 156px; }
  .addins { width: 64px; padding-right: 1px; }
  .adobe { width: 110px; padding-right: 2px; }
  .collapse { position: absolute; right: 9px; top: 82px; }

  .clip .gb { display: flex; padding: 9px 0 0 15px; }
  .paste { width: 36px; display: flex; flex-direction: column; align-items: center; }
  .paste span { margin-top: 3px; line-height: 16px; font-size: 11.5px; }
  .paste .chev { margin-top: 4px; color: #444; }
  .clipcol { margin-left: 6px; display: flex; flex-direction: column; gap: 9px; align-items: flex-start; padding-left: 3px; }
  .clipcol > svg:first-child { margin-left: 2px; margin-top: -1px; }
  .clipcol .r :global(.chev) { margin-left: 11px; }

  .rt { height: 24px; margin-top: 11px; padding-left: 8px; }
  .rb { height: 22px; margin-top: 9px; padding-left: 8px; }
  .chev { color: #444; }
  .sel { height: 24px; box-sizing: border-box; border: 1px solid #9a9a9a; border-radius: 4px; display: flex; align-items: center; justify-content: space-between; padding: 0 3px 0 3px; font-size: 11px; color: #333; }
  .fname { width: 123px; }
  .fsize { width: 44px; margin-left: 2px; }
  .grow, .shrink { font-size: 16px; color: #444; line-height: 1; display: flex; }
  .grow sup, .shrink sup { font-size: 10px; color: #888; line-height: 10px; vertical-align: top; }
  .grow { margin-left: 6px; width: 24px; }
  .shrink { font-size: 13.5px; margin-left: 4px; }
  .fb { font-weight: 700; font-size: 13px; margin-left: 8px; width: 12px; color: #444; }
  .fi { font-family: "Liberation Serif", serif; font-style: italic; font-size: 15px; margin-left: 15px; color: #444; width: 10px; }
  .fu { text-decoration: underline; font-size: 13px; margin-left: 13px; color: #444; width: 11px; }
  .c1 { margin-left: 9px; }
  .sep { width: 1px; height: 22px; background: #dcdcdc; flex: none; }
  .s1 { margin-left: 6px; }
  .bd { margin-left: 5px; }
  .c2 { margin-left: 6px; }
  .s2 { margin-left: 6px; }
  .fill { margin-left: 7px; }
  .c3 { margin-left: 5px; }
  .fc { margin-left: 9px; width: 17px; font-size: 14px; line-height: 15px; text-align: center; color: #333; border-bottom: 3px solid #e3001b; }
  .c4 { margin-left: 6px; }

  .align .rt, .align .rb { padding-left: 6px; }
  .a { width: 26px; height: 24px; display: flex; align-items: center; justify-content: center; flex: none; box-sizing: border-box; }
  .actv { width: 24px; border: 1px solid #9e9e9e; border-radius: 4px; background: #e9e9e9; margin-left: 1px; }
  .ori { margin-left: 7px; }
  .c5 { margin-left: 4px; }
  .s3 { margin-left: 22px; }
  .wrap { margin-left: 12px; display: flex; flex-direction: column; align-items: center; }
  .wrap b { font-weight: 400; font-size: 10px; line-height: 9px; color: #444; }
  .merge { margin-left: 15px; }
  .c6 { margin-left: 12px; }

  .nf { width: 147px; margin-left: 6px; }
  .num .rt { padding-left: 0; margin-left: 1px; }
  .num .rb { padding-left: 1px; }
  .dollar { margin-left: 13px; font-size: 16px; color: #444; width: 10px; }
  .c7 { margin-left: 9px; }
  .pct { margin-left: 10px; font-size: 17px; color: #444; width: 18px; }
  .comma { margin-left: 11px; }
  .s5 { margin-left: 11px; }
  .dec { margin-left: 5px; }
  .d2 { margin-left: 8px; }

  .bigs { display: flex; }
  .big { display: flex; flex-direction: column; align-items: center; text-align: center; font-size: 11.5px; line-height: 16px; color: #333; position: relative; }
  .big svg:first-child { height: 34px; margin-top: 6px; }
  .big span { margin-top: 2px; white-space: nowrap; }
  .big span :global(.chev) { display: inline-block; margin-left: 2px; vertical-align: 1px; }
  .sty .bigs { padding-left: 8px; }
  .b1 { width: 72px; }
  .b2 { width: 64px; }
  .b3 { width: 44px; }

  .three { padding: 3px 0 0 11px; gap: 0; }
  .cr { height: 26px; font-size: 11.5px; gap: 4px; }
  .cr :global(.ci) { margin-left: 10px; }
  .cr :global(.cd) { margin-left: 10px; }
  .cr :global(.cf) { margin-left: -3px; }
  .eb { display: flex; }
  .ec { padding: 3px 0 0 14px; width: 41px; box-sizing: content-box; }
  .ec .r { height: 26px; }
  .sigma { font-size: 18px; width: 16px; color: #444; line-height: 1; }
  .ec :global(.e1) { margin-left: 8px; }
  .ec :global(.e2) { margin-left: 1px; }
  .sort { width: 46px; }
  .find { width: 46px; }
  .solo { width: 100%; }

  /* formula bar */
  .fbar { height: 26px; flex: none; margin-top: 8px; display: flex; align-items: stretch; padding: 0 8px; }
  .namebox { width: 101px; box-sizing: border-box; background: #fff; border-radius: 4px; display: flex; align-items: center; justify-content: space-between; padding: 0 5px 0 7px; font-size: 12px; box-shadow: 0 0 0 1px #e6e6e6; }
  .vdots { width: 22px; text-align: center; font-size: 15px; line-height: 26px; font-weight: 700; color: #444; }
  .fxbox { width: 72px; background: #fff; border-radius: 4px; box-shadow: 0 0 0 1px #e6e6e6; display: flex; align-items: center; padding-left: 5px; gap: 9px; box-sizing: border-box; }
  .fxbox em { font-family: "Liberation Serif", serif; font-size: 18px; color: #333; margin-left: 1px; }
  .finput { margin-left: 6px; flex: 1; background: #fff; border-radius: 4px; box-shadow: 0 0 0 1px #e6e6e6; display: flex; align-items: center; justify-content: flex-end; padding-right: 4px; }

  /* sheet */
  .sheet { height: 587px; flex: none; margin-top: 7px; display: flex; overflow: hidden; }
  .grid { width: 1420px; flex: none; overflow: hidden; display: grid; grid-template-columns: 26px 144px 89px 99px 118px repeat(15, 64px); grid-auto-rows: 20px; background: #fff; font-family: "Lato", "Open Sans", sans-serif; font-size: 13px; color: #222; }
  .ch, .rh { background: #f0f0f0; color: #555; font-family: "Open Sans", sans-serif; font-size: 12px; display: flex; align-items: center; justify-content: center; box-sizing: border-box; border-right: 1px solid #e0e0e0; }
  .ch { border-bottom: 1px solid #a8a8a8; }
  .rh { border-bottom: 1px solid #e0e0e0; padding-right: 3px; }
  .chon { background: #dedede; color: #107c41; border-bottom: 2px solid #107c41; }
  .rhon { background: #dedede; color: #107c41; border-right: 2px solid #107c41; }
  .c { box-sizing: border-box; border-right: 1px solid #000; border-bottom: 1px solid #000; display: flex; align-items: center; justify-content: center; position: relative; white-space: nowrap; overflow: hidden; }
  .po { letter-spacing: -.3px; }
  .n { letter-spacing: -.5px; }
  .hd { background: #bdd7ee; font-size: 14px; }
  .y { background: #ff0; }
  .tri::before { content: ''; position: absolute; left: 0; top: 0; border-style: solid; border-width: 6px 6px 0 0; border-color: #1e6b3c transparent transparent transparent; }
  .e { box-sizing: border-box; border-right: 1px solid #d4d4d4; border-bottom: 1px solid #d4d4d4; }
  .vsb { flex: 1; background: #f4f4f4; position: relative; display: flex; flex-direction: column; align-items: center; padding-top: 5px; }
  .vthumb { position: absolute; left: 5px; top: 17px; width: 9px; height: 344px; border-radius: 5px; background: #6e6e6e; }
  .vdown { position: absolute; bottom: 2px; left: 4px; }

  /* tab bar */
  .tabbar { height: 32px; flex: none; background: #f0f0f0; display: flex; align-items: center; position: relative; }
  .tabbar > svg { margin-top: -2px; }
  .nav { margin-left: 27px; }
  .tabbar > .nx { margin-left: 25px; }
  .stab { margin-left: 48px; width: 56px; height: 28px; box-sizing: border-box; margin-top: -4px; background: #f7f7f7; text-align: center; font-weight: 600; font-size: 12.5px; line-height: 28px; color: #333; border-bottom: 2px solid #217346; }
  .plus { margin-left: 47px; }
  .hdots { margin-left: 629px; font-size: 15px; font-weight: 700; width: 10px; text-align: center; color: #333; }
  .harr { margin-left: 20px; }
  .hthumb { margin-left: 2px; width: 476px; height: 10px; border-radius: 5px; background: #6e6e6e; margin-top: -2px; }
  .tabbar > .r2 { margin-left: 34px; }

  /* status */
  .status { height: 22px; flex: none; background: #f6f6f6; display: flex; align-items: center; font-size: 11px; color: #444; position: relative; padding-bottom: 1px; box-sizing: border-box; }
  .ready { margin-left: 11px; width: 50px; }
  .acc { margin-right: 3px; }
  .acct { width: 1060px; white-space: nowrap; font-size: 11.3px; }
  .views { position: absolute; left: 1140px; top: 0; display: flex; }
  .vw { width: 40px; height: 22px; display: flex; align-items: center; justify-content: center; }
  .vw.on { background: #e0e0e0; }
  .zm { position: absolute; left: 1265px; top: 1px; font-size: 13px; }
  .slider { position: absolute; left: 1279px; top: 10px; width: 100px; height: 1px; background: #555; }
  .slider i { position: absolute; left: 47px; top: -5px; width: 5px; height: 11px; background: #555; }
  .zp { position: absolute; left: 1383px; top: 0; font-size: 13px; }
  .zv { position: absolute; left: 1405px; top: 3px; font-size: 11px; }

  /* taskbar */
  .taskbar { height: 40px; flex: none; background: #3a3a3a; display: flex; align-items: stretch; position: relative; color: #fff; }
  .start { width: 48px; display: flex; align-items: center; justify-content: center; }
  .tsearch { width: 288px; background: #f2f2f2; color: #333; display: flex; align-items: center; padding-left: 12px; gap: 10px; font-size: 13.5px; box-sizing: border-box; }
  .ti { width: 49px; display: flex; align-items: center; justify-content: center; position: relative; box-sizing: border-box; flex: none; }
  .tv { width: 51px; }
  .out { width: 48px; background: #b5672b; border-bottom: 3px solid #e8802a; padding-top: 3px; }
  .ex { width: 50px; }
  .run::after { content: ''; position: absolute; left: 4px; right: 5px; bottom: 0; height: 3px; background: #76b9ed; }
  .act { background: #6a6a6a; }
  .act::after { left: 0; right: 0; }
  .tray { margin-left: auto; width: 190px; display: flex; align-items: center; position: relative; }
  .tray > svg:first-child { margin-left: 6px; }
  .tnet { margin-left: 10px; }
  .tvol { margin-left: 8px; }
  .clock { margin-left: 0; width: 76px; display: flex; flex-direction: column; align-items: center; font-size: 11.5px; line-height: 18px; white-space: nowrap; }
  .notif { margin-left: 4px; position: relative; width: 28px; height: 28px; }
  .notif svg { margin-left: 3px; margin-top: 2px; }
  .notif b { position: absolute; left: 7px; top: 10px; font-size: 10.5px; line-height: 15px; padding: 0 3px; background: #3a3a3a; border-radius: 8px; border: 1px solid #888; }

  /* dialog */
  .dialog { position: absolute; left: 490px; top: 270px; width: 460px; height: 314px; box-sizing: border-box; background: #fff; border: 1px solid #1d7a55; padding: 0 25px; color: #333; }
  .dclose { position: absolute; right: 17px; top: 9px; }
  h1 { margin: 33px 0 0; font-size: 18px; line-height: 24px; font-weight: 600; color: #217346; }
  label { display: block; margin-top: 20px; font-size: 11.5px; line-height: 16px; }
  .l2 { margin-top: 26px; }
  .in { margin-top: 5px; height: 30px; width: 408px; box-sizing: border-box; border: 1px solid #8f8f8f; border-radius: 3px; display: flex; align-items: center; justify-content: space-between; padding: 0 8px 0 10px; font-size: 11.5px; }
  .in small { font-size: 10.5px; padding-top: 2px; }
  .loc { margin-top: 5px; width: 408px; height: 50px; box-sizing: border-box; border: 1px solid #9a9a9a; border-radius: 3px; background: #dedede; display: flex; align-items: center; padding: 0 9px 0 10px; }
  .lt { margin-left: 14px; flex: 1; display: flex; flex-direction: column; }
  .lt strong { font-weight: 400; font-size: 14.2px; line-height: 20px; }
  .lt span { font-size: 11.5px; line-height: 16px; }
  hr { position: absolute; left: 1px; right: 1px; top: 248px; margin: 0; border: 0; height: 1px; background: #dcdcdc; }
  .dfoot { position: absolute; left: 28px; right: 25px; top: 267px; height: 24px; display: flex; align-items: center; }
  .more { flex: 1; color: #217346; font-weight: 600; font-size: 11.3px; }
  .dfoot button { width: 70px; height: 24px; border-radius: 3px; font: 11.5px "Open Sans", sans-serif; padding: 0; box-sizing: border-box; }
  .save { background: #107c41; color: #fff; border: 0; margin-right: 9px; }
  .cancel { background: #fff; color: #333; border: 1px solid #8f8f8f; }

  /* overlay widget */
  .widget { position: absolute; left: 1390px; top: 444px; width: 50px; height: 120px; box-sizing: border-box; background: rgba(58,58,58,.96); padding: 31px 0 0 4px; display: flex; flex-direction: column; gap: 2px; overflow: hidden; }
  .widget::after { content: ''; position: absolute; left: 35px; top: 0; width: 9px; height: 120px; background: rgba(0,0,0,.22); }
  .wb { height: 27px; padding-left: 10px; line-height: 27px; font-family: "Lato", sans-serif; font-weight: 700; font-size: 13px; color: #f0f8f8; white-space: nowrap; }
  .wa { background: #6cb6c8; }
  .wg { background: #44c682; }
  .wr { background: #ec6258; }

  .ghost { position: absolute; top: 0; width: 3px; background: rgba(0,0,0,.035); pointer-events: none; }
  .gl1 { left: 514px; height: 445px; }
  .gl2 { left: 924px; height: 445px; }
</style>
